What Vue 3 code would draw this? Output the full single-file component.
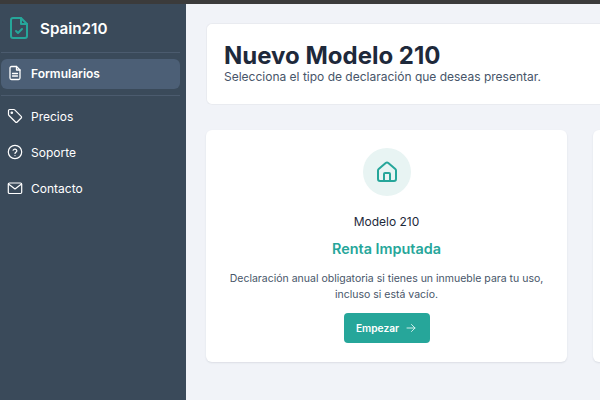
<script setup>
const cards = [
  { id: 'a', sup: 'Modelo 210', title: 'Renta Imputada', lines: ['Declaración anual obligatoria si tienes un inmueble para tu uso,', 'incluso si está vacío.'] },
  { id: 'b', sup: '', title: '', lines: [] }
]
</script>

<template>
  <div class="page">
    <div class="topbar"></div>
    <div class="shell">
      <aside class="sidebar">
        <div class="brand">
          <svg width="24" height="24" viewBox="0 0 24 24" fill="none" stroke="#26a69a" stroke-width="2" stroke-linecap="round" stroke-linejoin="round">
            <path d="M14 2H6a2 2 0 0 0-2 2v16a2 2 0 0 0 2 2h12a2 2 0 0 0 2-2V8z"/>
            <path d="M14 2v6h6"/>
            <path d="m9 15 2 2 4-4"/>
          </svg>
          <span>Spain210</span>
        </div>
        <div class="rule"></div>
        <a class="item active">
          <svg width="16" height="16" viewBox="0 0 16 16" fill="none" stroke="#fff" stroke-width="1.3" stroke-linecap="round" stroke-linejoin="round">
            <path d="M9.500 1.500H4.500A1.500 1.500 0 0 0 3 3v10a1.500 1.500 0 0 0 1.500 1.500h7A1.500 1.500 0 0 0 13 13V5z"/>
            <path d="M9.500 1.500V5H13"/>
            <path d="M5.500 8.500h5M5.500 11h5"/>
          </svg>
          <span>Formularios</span>
        </a>
        <div class="rule"></div>
        <nav class="links">
          <a class="item">
            <svg width="16" height="16" viewBox="0 0 16 16" fill="none" stroke="#fff" stroke-width="1.2" stroke-linecap="round" stroke-linejoin="round">
              <path d="M1.500 2.700A1.200 1.200 0 0 1 2.700 1.500h4.300a1 1 0 0 1 .7.300l6.500 6.500a1.200 1.200 0 0 1 0 1.700l-4 4a1.200 1.200 0 0 1-1.700 0L2 7.500a1.500 1.500 0 0 1-.5-1z"/>
              <circle cx="4.800" cy="4.800" r=".7"/>
            </svg>
            <span>Precios</span>
          </a>
          <a class="item">
            <svg width="16" height="16" viewBox="0 0 16 16" fill="none" stroke="#fff" stroke-width="1.2" stroke-linecap="round" stroke-linejoin="round">
              <circle cx="8" cy="8" r="6.700"/>
              <path d="M6.100 6.200a2 2 0 0 1 3.800.6c0 1.300-1.900 1.700-1.900 2.700"/>
              <path d="M8 11.500v.1"/>
            </svg>
            <span>Soporte</span>
          </a>
          <a class="item">
            <svg width="16" height="16" viewBox="0 0 16 16" fill="none" stroke="#fff" stroke-width="1.2" stroke-linecap="round" stroke-linejoin="round">
              <rect x="1.300" y="3" width="13.400" height="10.500" rx="1.200"/>
              <path d="m1.500 4 6.500 5 6.500-5"/>
            </svg>
            <span>Contacto</span>
          </a>
        </nav>
      </aside>
      <main class="main">
        <header class="head">
          <h1>Nuevo Modelo 210</h1>
          <p>Selecciona el tipo de declaración que deseas presentar.</p>
        </header>
        <section class="grid">
          <article v-for="c in cards" :key="c.id" class="card">
            <template v-if="c.title">
              <div class="bubble">
                <svg width="24" height="24" viewBox="0 0 24 24" fill="none" stroke="#26a69a" stroke-width="2" stroke-linecap="round" stroke-linejoin="round">
                  <path d="M3 10.500a2 2 0 0 1 .7-1.500l7-6a2 2 0 0 1 2.600 0l7 6a2 2 0 0 1 .7 1.500V19a2 2 0 0 1-2 2H5a2 2 0 0 1-2-2z"/>
                  <path d="M9 21v-7a1 1 0 0 1 1-1h4a1 1 0 0 1 1 1v7"/>
                </svg>
              </div>
              <div class="sup">{{ c.sup }}</div>
              <h2>{{ c.title }}</h2>
              <p class="desc"><span v-for="l in c.lines" :key="l">{{ l }}</span></p>
              <button class="cta">
                Empezar
                <svg width="12" height="12" viewBox="0 0 24 24" fill="none" stroke="#cfeeea" stroke-width="2" stroke-linecap="round" stroke-linejoin="round">
                  <path d="M4 12h16M13 5l7 7-7 7"/>
                </svg>
              </button>
            </template>
          </article>
        </section>
      </main>
    </div>
  </div>
</template>

<style>
html, body { margin: 0; overflow: hidden; }
</style>

<style scoped>
.page { width: 600px; height: 400px; overflow: hidden; font-family: Inter, "Liberation Sans", sans-serif; display: flex; flex-direction: column; }
.topbar { height: 4px; flex: none; background: #3b3b3b; }
.shell { flex: 1; display: flex; min-height: 0; }
.sidebar { width: 186px; flex: none; box-sizing: border-box; background: #3a4a5a; padding: 0 6px 0 1px; color: #fff; }
.brand { height: 48px; display: flex; align-items: center; gap: 9px; padding-left: 6px; font-size: 15.200px; font-weight: 600; }
.rule { height: 1px; background: #4b5b6e; }
.item { display: flex; align-items: center; gap: 8px; height: 30px; padding-left: 6px; font-size: 12px; color: #fff; border-radius: 6px; box-sizing: border-box; }
.item.active { background: #4c5f76; font-weight: 600; margin: 6px 0; padding-bottom: 2px; }
.links { display: flex; flex-direction: column; gap: 6px; padding-top: 5px; }
.main { flex: 1; min-width: 0; background: #f1f3f8; padding: 19px 0 0 20px; overflow: hidden; }
.head { box-sizing: border-box; height: 82px; width: 420px; background: #fff; border: 1px solid #e9ebf0; border-right: 0; border-radius: 6px 0 0 6px; padding: 18px 17px; }
h1 { margin: 0; font-size: 24px; line-height: 28px; font-weight: 700; color: #1e293b; }
.head p { margin: 0; font-size: 12px; line-height: 13px; color: #475569; }
.grid { display: flex; gap: 26px; margin-top: 25px; }
.card { flex: none; width: 361px; height: 232px; box-sizing: border-box; background: #fff; border-radius: 6px; box-shadow: 0 1px 2px rgba(30, 41, 59, .1); display: flex; flex-direction: column; align-items: center; padding-top: 18px; }
.bubble { width: 48px; height: 48px; border-radius: 50%; background: #e8f4f3; display: flex; align-items: center; justify-content: center; }
.sup { margin-top: 18px; font-size: 12px; line-height: 16px; color: #1e293b; }
h2 { margin: 9px 0 0; font-size: 14.400px; line-height: 20px; font-weight: 600; color: #26a69a; }
.desc { margin: 12px 0 0; display: flex; flex-direction: column; align-items: center; font-size: 10.500px; line-height: 16px; color: #475569; }
.cta { margin-top: 10px; width: 86px; height: 30px; border: 0; border-radius: 4px; background: #26a69a; color: #fff; font: 600 10.200px Inter, sans-serif; display: flex; align-items: center; justify-content: center; gap: 6px; }
</style>
